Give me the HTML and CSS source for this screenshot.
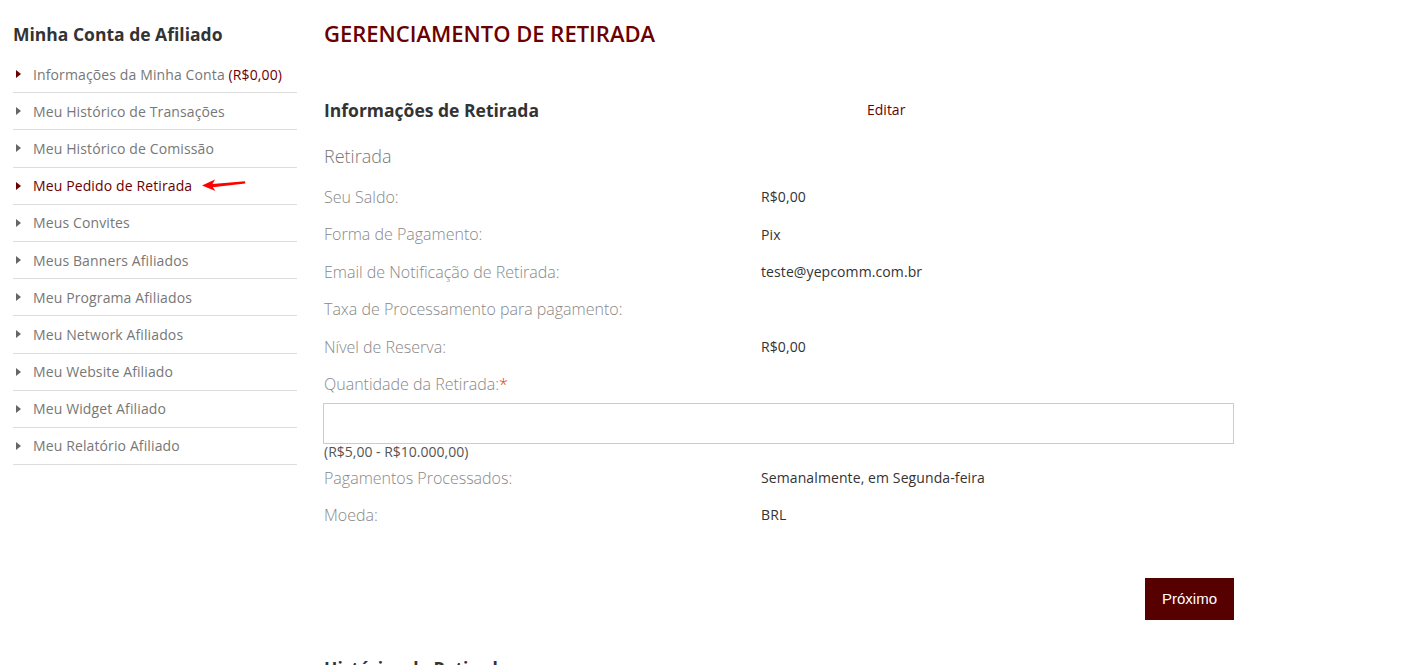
FILE: index.html
```html
<!DOCTYPE html>
<html lang="pt-BR">
<head>
<meta charset="utf-8">
<title>Gerenciamento de Retirada</title>
<link rel="stylesheet" href="styles.css">
</head>
<body>
<div class="page">
  <aside class="sidebar">
    <h3 class="side-title">Minha Conta de Afiliado</h3>
    <ul class="side-list">
      <li class="side-item active-bullet"><span class="tri"></span><span class="side-text">Informações da Minha Conta <span class="amt">(R$0,00)</span></span></li>
      <li class="side-item"><span class="tri"></span><span class="side-text">Meu Histórico de Transações</span></li>
      <li class="side-item"><span class="tri"></span><span class="side-text">Meu Histórico de Comissão</span></li>
      <li class="side-item active"><span class="tri"></span><span class="side-text">Meu Pedido de Retirada</span>
        <svg class="arrow" width="46" height="14" viewBox="0 0 46 14"><path d="M1 7.5 L14 1.5 L11.5 6 L44 3.2 L44.3 5.6 L11.8 9.2 L14.5 13 Z" fill="#f00"/></svg>
      </li>
      <li class="side-item"><span class="tri"></span><span class="side-text">Meus Convites</span></li>
      <li class="side-item"><span class="tri"></span><span class="side-text">Meus Banners Afiliados</span></li>
      <li class="side-item"><span class="tri"></span><span class="side-text">Meu Programa Afiliados</span></li>
      <li class="side-item"><span class="tri"></span><span class="side-text">Meu Network Afiliados</span></li>
      <li class="side-item"><span class="tri"></span><span class="side-text">Meu Website Afiliado</span></li>
      <li class="side-item"><span class="tri"></span><span class="side-text">Meu Widget Afiliado</span></li>
      <li class="side-item"><span class="tri"></span><span class="side-text">Meu Relatório Afiliado</span></li>
    </ul>
  </aside>
  <main class="main">
    <h1 class="page-title">GERENCIAMENTO DE RETIRADA</h1>
    <div class="info-head">
      <h2 class="section-title">Informações de Retirada</h2>
      <a class="edit-link">Editar</a>
    </div>
    <div class="subhead">Retirada</div>
    <div class="row"><div class="label">Seu Saldo:</div><div class="value">R$0,00</div></div>
    <div class="row"><div class="label">Forma de Pagamento:</div><div class="value">Pix</div></div>
    <div class="row"><div class="label">Email de Notificação de Retirada:</div><div class="value">teste@yepcomm.com.br</div></div>
    <div class="row"><div class="label">Taxa de Processamento para pagamento:</div><div class="value"></div></div>
    <div class="row"><div class="label">Nível de Reserva:</div><div class="value">R$0,00</div></div>
    <div class="row"><div class="label">Quantidade da Retirada:<span class="req">*</span></div></div>
    <input class="amount-input" type="text">
    <div class="hint">(R$5,00 - R$10.000,00)</div>
    <div class="row"><div class="label">Pagamentos Processados:</div><div class="value">Semanalmente, em Segunda-feira</div></div>
    <div class="row"><div class="label">Moeda:</div><div class="value">BRL</div></div>
    <div class="actions"><button class="btn-next">Próximo</button></div>
    <h2 class="section-title history">Histórico de Retirada</h2>
  </main>
</div>
</body>
</html>
```
FILE: styles.css
```css
html, body {
  margin: 0;
  padding: 0;
  background: #fff;
}
body {
  font-family: "Open Sans", "Liberation Sans", sans-serif;
  color: #333;
  overflow: hidden;
}
.page {
  display: flex;
  align-items: flex-start;
  padding-left: 13px;
  gap: 27px;
}
.sidebar {
  width: 284px;
  flex: none;
}
.side-title {
  margin: 0;
  padding-top: 22px;
  font-size: 17.5px;
  line-height: 24px;
  font-weight: 700;
  color: #333;
}
.side-list {
  list-style: none;
  margin: 10px 0 0;
  padding: 0;
}
.side-item {
  position: relative;
  display: flex;
  align-items: center;
  height: 36.2px;
  border-bottom: 1px solid #ddd;
  font-size: 14px;
  letter-spacing: 0.12px;
  color: #777;
}
.tri {
  width: 0;
  height: 0;
  margin-left: 3px;
  margin-right: 12px;
  border-top: 4px solid transparent;
  border-bottom: 4px solid transparent;
  border-left: 5px solid #666;
}
.active-bullet .tri,
.active .tri {
  border-left-color: #6b0000;
}
.active .side-text {
  color: #6b0000;
}
.amt {
  color: #6b0000;
}
.arrow {
  position: absolute;
  left: 188px;
  top: 10px;
}
.main {
  width: 910px;
  flex: none;
}
.page-title {
  margin: 0;
  padding-top: 18px;
  font-size: 22px;
  line-height: 30px;
  font-weight: 600;
  color: #6b0000;
}
.info-head {
  display: flex;
  align-items: center;
  margin-top: 50px;
}
.section-title {
  margin: 0;
  font-size: 17.5px;
  line-height: 24px;
  font-weight: 700;
  color: #333;
}
.info-head .section-title {
  width: 543px;
}
.edit-link {
  font-size: 14px;
  color: #6b0000;
  margin-top: -1px;
}
.subhead {
  margin-top: 22px;
  font-size: 18px;
  line-height: 24px;
  font-weight: 300;
  color: #777;
}
.subhead + .row {
  margin-top: 10px;
}
.row {
  display: flex;
  align-items: center;
  height: 37.5px;
}
.label {
  width: 437px;
  flex: none;
  font-size: 16px;
  font-weight: 300;
  color: #888;
}
.value {
  font-size: 14px;
  letter-spacing: 0.1px;
  color: #333;
}
.req {
  color: #e03a1e;
}
.amount-input {
  display: block;
  box-sizing: border-box;
  width: 911px;
  height: 41px;
  margin: 0 0 0 -1px;
  border: 1px solid #ccc;
  outline: none;
  background: #fff;
}
.hint {
  font-size: 14px;
  line-height: 14px;
  padding-top: 1px;
  color: #555;
}
.hint + .row {
  height: 37px;
}
.actions {
  display: flex;
  justify-content: flex-end;
  margin-top: 44px;
}
.btn-next {
  width: 89px;
  height: 42px;
  border: none;
  background: #560000;
  color: #fff;
  font-family: "Liberation Sans", Arial, sans-serif;
  font-size: 15px;
}
.history {
  margin-top: 36px;
}
```
